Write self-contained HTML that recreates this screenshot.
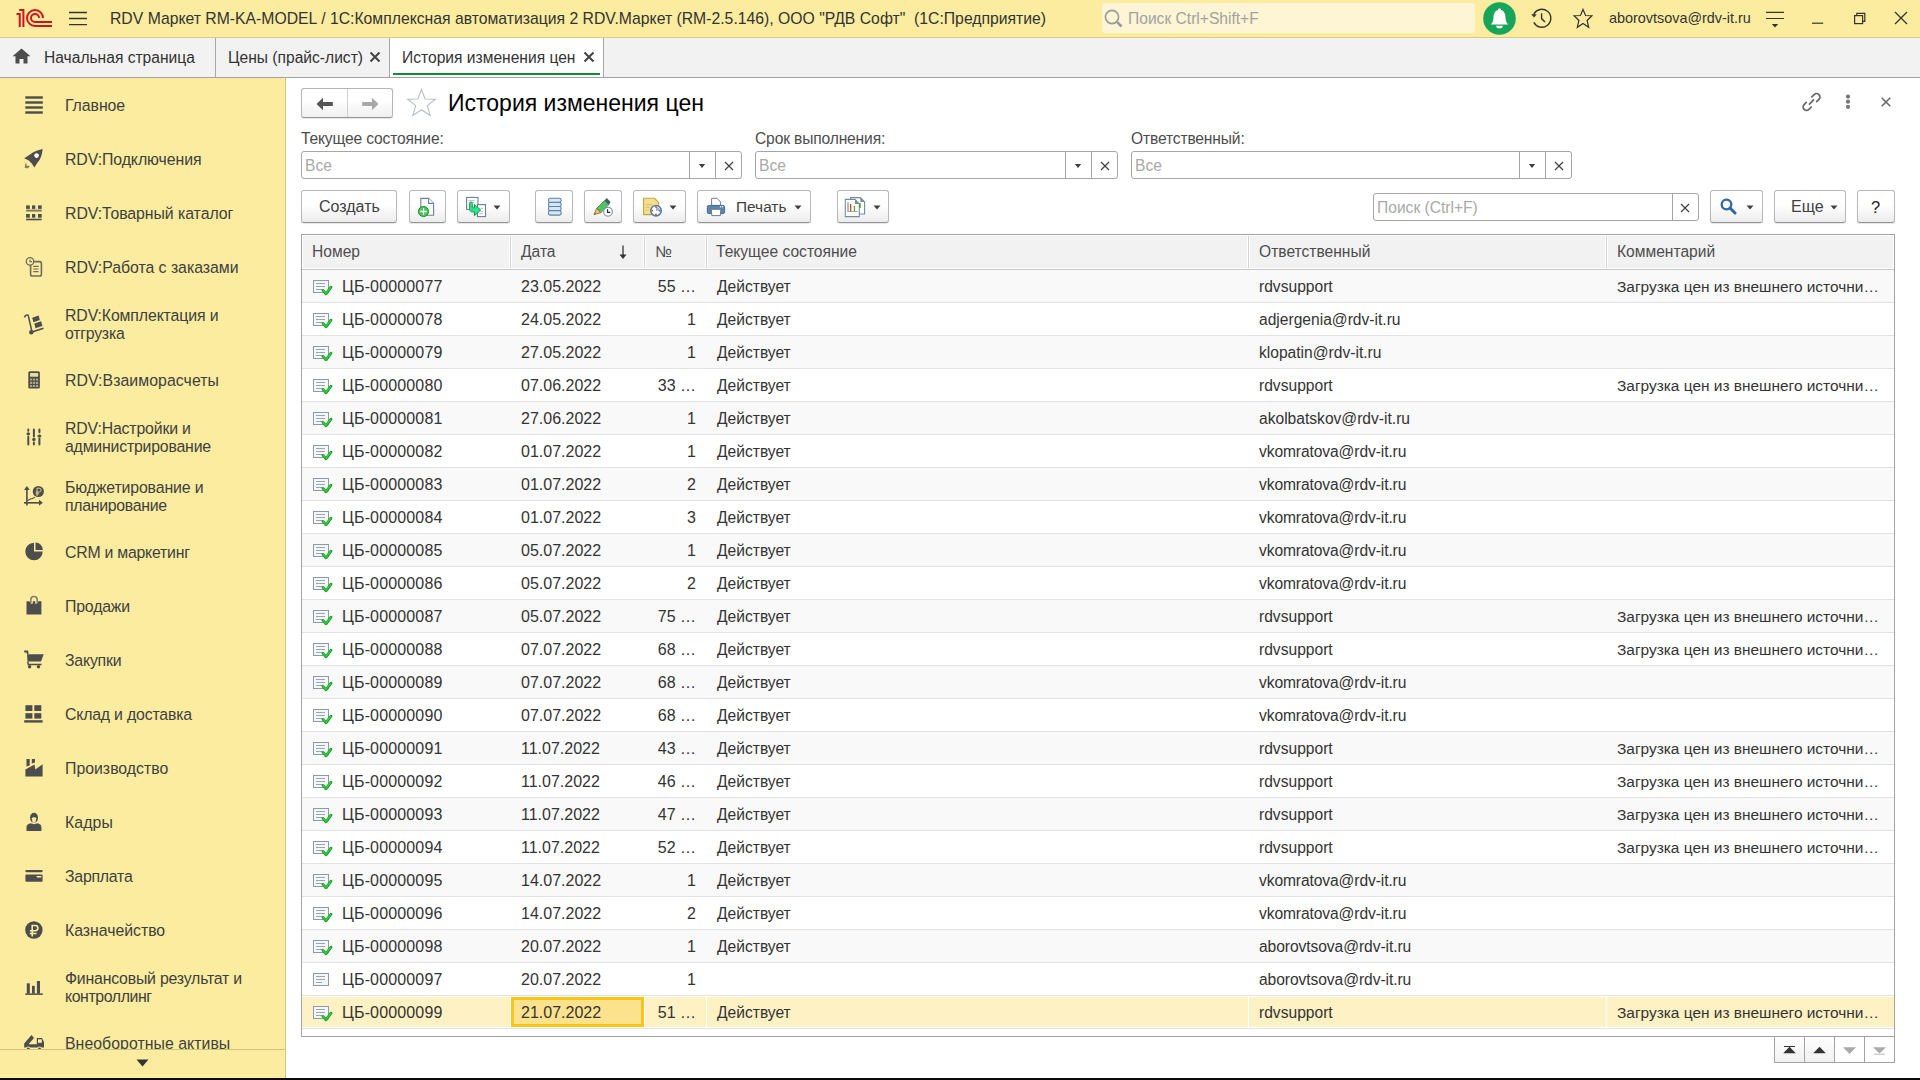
<!DOCTYPE html>
<html><head><meta charset="utf-8"><title>История изменения цен</title>
<style>
html,body{margin:0;padding:0}
body{width:1920px;height:1080px;position:relative;overflow:hidden;background:#fff;font-family:"Liberation Sans",sans-serif}
.t{position:absolute;white-space:pre;line-height:20px}
svg{display:block}
</style></head><body>
<div style="position:absolute;left:0px;top:0px;width:1920px;height:37px;background:#fbec9f"></div>
<div style="position:absolute;left:0px;top:37px;width:1920px;height:1px;background:#d9cc80"></div>
<svg style="position:absolute;left:0px;top:0px;" width="60" height="37" viewBox="0 0 60 37"><g fill="none" stroke="#d2131b" stroke-width="2">
<path d="M16.5 14 H19.75 V27"/><path d="M19.25 10.1 H23.4 V27"/>
<path d="M43 18 A8 8 0 1 0 35 26 H52"/>
<path d="M39 18 A4 4 0 1 0 35 22 H52"/>
</g></svg>
<svg style="position:absolute;left:69px;top:11px;" width="18" height="15" viewBox="0 0 18 15"><g stroke="#333" stroke-width="1.3"><path d="M0 1.5H18M0 7.5H18M0 13.7H18"/></g></svg>
<div class="t" style="left:110px;top:9px;font-size:15.75px;color:#333;">RDV Маркет RM-KA-MODEL / 1С:Комплексная автоматизация 2 RDV.Маркет (RM-2.5.146), ООО &quot;РДВ Софт&quot;  (1С:Предприятие)</div>
<div style="position:absolute;left:1102px;top:3px;width:373px;height:30px;background:#fdf5d3;border-radius:3px"></div>
<svg style="position:absolute;left:1104px;top:8px;" width="20" height="20" viewBox="0 0 20 20"><g fill="none" stroke="#999" stroke-width="1.6"><circle cx="8" cy="9" r="6.6"/><path d="M13.2 14.2 L17.5 18.5" stroke-width="2.6"/></g></svg>
<div class="t" style="left:1128px;top:9px;font-size:15.6px;color:#a2a2a2;">Поиск Ctrl+Shift+F</div>
<svg style="position:absolute;left:1483px;top:2px;" width="33" height="33" viewBox="0 0 33 33"><circle cx="16.5" cy="16.5" r="16.3" fill="#17a55a"/><path d="M16.5 6.6 C17.5 6.6 18 7.3 18 8.1 C21.4 9 22.4 12.4 22.5 15.8 C22.6 18.9 23.4 20.7 25.1 22.6 H7.9 C9.6 20.7 10.4 18.9 10.5 15.8 C10.6 12.4 11.6 9 15 8.1 C15 7.3 15.5 6.6 16.5 6.6 Z" fill="#fff"/><path d="M13.2 23.7 H19.8 A3.3 2.6 0 0 1 13.2 23.7 Z" fill="#fff"/></svg>
<svg style="position:absolute;left:1530px;top:8px;" width="22" height="21" viewBox="0 0 22 21"><g fill="none" stroke="#333" stroke-width="1.4"><path d="M3.8 14.4 A9 9 0 1 0 3.8 6.2"/><path d="M11.6 5.2 V10.6 L15 14"/></g><path d="M1.2 6.2 H6.8 L4 9.6 Z" fill="#333"/></svg>
<svg style="position:absolute;left:1572px;top:8px;" width="22" height="21" viewBox="0 0 22 21"><path d="M11 1.4 L13.6 7.5 L19.9 7.7 L15.1 12.5 L16.7 19.3 L11 15.4 L5.3 19.3 L6.9 12.5 L2.1 7.7 L8.4 7.5 Z" fill="none" stroke="#333" stroke-width="1.2" stroke-linejoin="miter"/></svg>
<div class="t" style="left:1609px;top:8px;font-size:14.4px;color:#333;">aborovtsova@rdv-it.ru</div>
<svg style="position:absolute;left:1765px;top:11px;" width="20" height="18" viewBox="0 0 20 18"><g stroke="#333" stroke-width="1.2"><path d="M1 1.3H19M1 7.5H19"/></g><path d="M6.8 13 L13.2 13 L10 16.5z" fill="#333"/></svg>
<svg style="position:absolute;left:1812px;top:22px;" width="12" height="3" viewBox="0 0 12 3"><path d="M0 1.2H11.2" stroke="#333" stroke-width="1.2"/></svg>
<svg style="position:absolute;left:1853px;top:12px;" width="13" height="13" viewBox="0 0 13 13"><g fill="none" stroke="#333" stroke-width="1.2"><rect x="1.6" y="3.6" width="8" height="8"/><path d="M3.8 3.6 V1.4 H11.8 V9.4 H9.6"/></g></svg>
<svg style="position:absolute;left:1894px;top:11px;" width="14" height="14" viewBox="0 0 14 14"><path d="M1 1L13 13M13 1L1 13" stroke="#333" stroke-width="1.3"/></svg>
<div style="position:absolute;left:0px;top:38px;width:1920px;height:39px;background:#f2f2f2"></div>
<div style="position:absolute;left:0px;top:77px;width:1920px;height:1px;background:#a3a3a3"></div>
<div style="position:absolute;left:389px;top:38px;width:215px;height:39px;background:#fff"></div>
<div style="position:absolute;left:215px;top:38px;width:1px;height:39px;background:#a8a8a8"></div>
<div style="position:absolute;left:389px;top:38px;width:1px;height:39px;background:#a5a5a5"></div>
<div style="position:absolute;left:603px;top:38px;width:1px;height:39px;background:#a5a5a5"></div>
<div style="position:absolute;left:393px;top:73px;width:207px;height:2px;background:#0f8d37"></div>
<svg style="position:absolute;left:12px;top:48px;" width="19" height="16" viewBox="0 0 19 16"><path d="M9.5 0.5 L18.5 8.2 H15.5 V15.5 H11.5 V11 H7.5 V15.5 H3.5 V8.2 H0.5 Z" fill="#4d4d4d"/></svg>
<div class="t" style="left:44px;top:48px;font-size:15.6px;color:#333;">Начальная страница</div>
<div class="t" style="left:228px;top:48px;font-size:15.6px;color:#333;">Цены (прайс-лист)</div>
<svg style="position:absolute;left:369px;top:51px;" width="12" height="12" viewBox="0 0 12 12"><path d="M1.5 1.5L10.5 10.5M10.5 1.5L1.5 10.5" stroke="#444" stroke-width="2"/></svg>
<div class="t" style="left:402px;top:48px;font-size:15.6px;color:#333;">История изменения цен</div>
<svg style="position:absolute;left:583px;top:51px;" width="12" height="12" viewBox="0 0 12 12"><path d="M1.5 1.5L10.5 10.5M10.5 1.5L1.5 10.5" stroke="#444" stroke-width="2"/></svg>
<div style="position:absolute;left:0px;top:78px;width:285px;height:1000px;background:#fbec9f"></div>
<div style="position:absolute;left:285px;top:78px;width:1px;height:1000px;background:#d3c783"></div>
<div style="position:absolute;left:0;top:78px;width:285px;height:971px;overflow:hidden">
<div class="t" style="left:65px;top:18px;font-size:15.85px;letter-spacing:-0.07px;color:#404040">Главное</div>
<div class="t" style="left:65px;top:72px;font-size:15.85px;letter-spacing:-0.07px;color:#404040">RDV:Подключения</div>
<div class="t" style="left:65px;top:126px;font-size:15.85px;letter-spacing:-0.06px;color:#404040">RDV:Товарный каталог</div>
<div class="t" style="left:65px;top:180px;font-size:15.85px;letter-spacing:-0.03px;color:#404040">RDV:Работа с заказами</div>
<div class="t" style="left:65px;top:228px;font-size:15.85px;letter-spacing:-0.12px;color:#404040">RDV:Комплектация и</div>
<div class="t" style="left:65px;top:246px;font-size:15.85px;letter-spacing:-0.24px;color:#404040">отгрузка</div>
<div class="t" style="left:65px;top:293px;font-size:15.85px;letter-spacing:0.06px;color:#404040">RDV:Взаиморасчеты</div>
<div class="t" style="left:65px;top:341px;font-size:15.85px;letter-spacing:-0.16px;color:#404040">RDV:Настройки и</div>
<div class="t" style="left:65px;top:359px;font-size:15.85px;letter-spacing:-0.2px;color:#404040">администрирование</div>
<div class="t" style="left:65px;top:400px;font-size:15.85px;letter-spacing:-0.13px;color:#404040">Бюджетирование и</div>
<div class="t" style="left:65px;top:418px;font-size:15.85px;letter-spacing:-0.3px;color:#404040">планирование</div>
<div class="t" style="left:65px;top:465px;font-size:15.85px;letter-spacing:-0.24px;color:#404040">CRM и маркетинг</div>
<div class="t" style="left:65px;top:519px;font-size:15.85px;letter-spacing:-0.17px;color:#404040">Продажи</div>
<div class="t" style="left:65px;top:573px;font-size:15.85px;letter-spacing:-0.2px;color:#404040">Закупки</div>
<div class="t" style="left:65px;top:627px;font-size:15.85px;letter-spacing:-0.19px;color:#404040">Склад и доставка</div>
<div class="t" style="left:65px;top:681px;font-size:15.85px;letter-spacing:0px;color:#404040">Производство</div>
<div class="t" style="left:65px;top:735px;font-size:15.85px;letter-spacing:0.1px;color:#404040">Кадры</div>
<div class="t" style="left:65px;top:789px;font-size:15.85px;letter-spacing:-0.23px;color:#404040">Зарплата</div>
<div class="t" style="left:65px;top:843px;font-size:15.85px;letter-spacing:-0.03px;color:#404040">Казначейство</div>
<div class="t" style="left:65px;top:891px;font-size:15.85px;letter-spacing:-0.2px;color:#404040">Финансовый результат и</div>
<div class="t" style="left:65px;top:909px;font-size:15.85px;letter-spacing:-0.4px;color:#404040">контроллинг</div>
<div class="t" style="left:65px;top:956px;font-size:15.85px;letter-spacing:0.04px;color:#404040">Внеоборотные активы</div>
</div>
<div style="position:absolute;left:0px;top:1049px;width:285px;height:1px;background:#cfc27f"></div>
<svg style="position:absolute;left:136px;top:1059px;" width="13" height="8" viewBox="0 0 13 8"><path d="M0.5 0.5 H12.5 L6.5 7.5z" fill="#333"/></svg>
<div style="position:absolute;left:0px;top:1078px;width:1920px;height:2px;background:#0b0b0b"></div>
<svg style="position:absolute;left:20px;top:90px;" width="30" height="30" viewBox="0 0 30 30"><g fill="#4d4d4d"><rect x="5.3" y="6.3" width="17.5" height="2.4"/><rect x="5.3" y="11.3" width="17.5" height="2.4"/><rect x="5.3" y="16.3" width="17.5" height="2.4"/><rect x="5.3" y="21.3" width="17.5" height="2.4"/></g></svg>
<svg style="position:absolute;left:20px;top:144px;" width="30" height="30" viewBox="0 0 30 30"><path d="M22.6 5 C17.5 6 12.8 8 10 10.6 L4.2 14.3 L8.8 16.6 L12 19.8 L14.3 23.4 L17.6 18.4 C20.4 15.6 22.2 10.8 22.6 5 Z" fill="#4d4d4d"/><circle cx="16.6" cy="11.6" r="2.3" fill="#fff"/><path d="M5.6 19 L9.6 22.4 L7.6 24.4 L4.6 23.6 Z" fill="#4d4d4d" opacity=".7"/><circle cx="7.3" cy="20.9" r="1" fill="#fbec9f"/></svg>
<svg style="position:absolute;left:20px;top:198px;" width="30" height="30" viewBox="0 0 30 30"><g fill="#4d4d4d"><rect x="6.1" y="7.4" width="3.7" height="3.5"/><rect x="12" y="7.4" width="3.3" height="3.5"/><rect x="18" y="7.4" width="3.7" height="3.5"/><rect x="6.1" y="16" width="3.7" height="3.7"/><rect x="12" y="16" width="3.3" height="3.7"/><rect x="18" y="16" width="3.7" height="3.7"/><rect x="6.1" y="20.7" width="15.6" height="1.6"/></g><rect x="6.1" y="11.6" width="15.6" height="2" fill="#4d4d4d" opacity=".7"/></svg>
<svg style="position:absolute;left:20px;top:252px;" width="30" height="30" viewBox="0 0 30 30"><g fill="none" stroke="#4d4d4d" opacity=".8"><rect x="10.6" y="9.6" width="10.8" height="14.4" rx="1.8" stroke-width="1.6"/><circle cx="10" cy="9.4" r="3.7" stroke-width="1.3" fill="#fbec9f"/><path d="M13.2 14.4H18.6M13.2 17H18.6M13.2 19.6H18.6" stroke-width="1.2"/><path d="M10 7.5V9.6H12" stroke-width="1.1"/></g></svg>
<svg style="position:absolute;left:20px;top:309px;" width="30" height="30" viewBox="0 0 30 30"><g fill="none" stroke="#4d4d4d" stroke-width="1.5"><path d="M4.5 8.5 C4.8 6.3 6.6 5.6 8.2 6.2 L12 23"/><path d="M12 23 L23.5 19.2" stroke-width="1.6"/></g><circle cx="11.3" cy="23.2" r="2.2" fill="#4d4d4d"/><path d="M12.2 8.8 L18.6 6.6 L19.8 11 L13.4 13.2 Z M14.3 14.6 L21.2 12.3 L22.4 17 L15.5 19.3 Z" fill="#4d4d4d"/></svg>
<svg style="position:absolute;left:20px;top:365px;" width="30" height="30" viewBox="0 0 30 30"><rect x="8.3" y="6.2" width="11.6" height="17.4" rx="1.6" fill="#4d4d4d"/><rect x="10" y="8" width="8.2" height="3.8" rx=".8" fill="#fbec9f" opacity=".9"/><g fill="#fbec9f" opacity=".55"><rect x="10" y="13.6" width="2.2" height="2"/><rect x="13" y="13.6" width="2.2" height="2"/><rect x="16" y="13.6" width="2.2" height="2"/><rect x="10" y="16.8" width="2.2" height="2.2"/><rect x="13" y="16.8" width="2.2" height="2.2"/><rect x="16" y="16.8" width="2.2" height="2.2"/><rect x="10" y="20" width="2.2" height="2"/><rect x="13" y="20" width="2.2" height="2"/><rect x="16" y="20" width="2.2" height="2"/></g></svg>
<svg style="position:absolute;left:20px;top:422px;" width="30" height="30" viewBox="0 0 30 30"><g stroke="#4d4d4d" stroke-width="2" stroke-linecap="round"><path d="M8.3 7.5V8.7M8.3 14.8V22.6M13.9 7.5V14.4M13.9 20.6V22.6M19.4 7.5V10.2M19.4 16.5V22.6"/></g><g fill="#4d4d4d"><ellipse cx="8.3" cy="11.8" rx="1.8" ry="1.6"/><circle cx="13.9" cy="17.5" r="1.7"/><ellipse cx="19.4" cy="14" rx="2" ry="1.5"/></g></svg>
<svg style="position:absolute;left:20px;top:481px;" width="30" height="30" viewBox="0 0 30 30"><g fill="#4d4d4d"><path d="M4 9 L6.9 5 L9.8 9 Z"/><path d="M19 18.8 L22.8 21.8 L19 24.8 Z"/><rect x="6.1" y="8" width="1.6" height="16.5"/><rect x="4" y="21" width="15.5" height="1.6"/><circle cx="18.3" cy="10.5" r="5.6"/></g><path d="M7.5 19.5 L10.5 18 L12.5 17.6 L14.8 16.2" fill="none" stroke="#4d4d4d" stroke-width="1.1"/><g fill="none" stroke="#fbec9f" stroke-width="1" opacity=".8"><path d="M17 15V7.2H19.2A1.9 1.9 0 0 1 19.2 11H15.8M15.8 12.8H19"/></g></svg>
<svg style="position:absolute;left:20px;top:537px;" width="30" height="30" viewBox="0 0 30 30"><path d="M14 5.8 V14.5 H22.7 A8.7 8.7 0 1 1 14 5.8 Z" fill="#4d4d4d"/><path d="M15.5 5.6 A7.4 7.4 0 0 1 22.9 13 H15.5 Z" fill="#4d4d4d"/></svg>
<svg style="position:absolute;left:20px;top:591px;" width="30" height="30" viewBox="0 0 30 30"><path d="M6.5 10.2 H9.6 C 10 12.5 11.8 13.2 12.8 12.5 V10.2 H15.2 V12.5 C16.2 13.2 18 12.5 18.3 10.2 H21.4 V23.6 H6.5 Z" fill="#4d4d4d"/><path d="M10.8 12.3 V8.8 A3.2 3.2 0 0 1 17.2 8.8 V12.3" fill="none" stroke="#4d4d4d" stroke-width="1.5" opacity=".7"/></svg>
<svg style="position:absolute;left:20px;top:645px;" width="30" height="30" viewBox="0 0 30 30"><path d="M4.2 6.5 H7.3 L7.8 9" fill="none" stroke="#4d4d4d" stroke-width="1.8"/><path d="M7 9.2 H23.7 L21 16.6 H7.5 Z" fill="#4d4d4d"/><path d="M7.8 16.5 L8.3 19.5 H21.5" fill="none" stroke="#4d4d4d" stroke-width="1.5"/><circle cx="9.6" cy="21.8" r="1.7" fill="#4d4d4d"/><circle cx="18.5" cy="21.8" r="1.7" fill="#4d4d4d"/></svg>
<svg style="position:absolute;left:20px;top:699px;" width="30" height="30" viewBox="0 0 30 30"><g fill="#4d4d4d"><rect x="5.4" y="6.2" width="7" height="5.8"/><rect x="14.3" y="6.2" width="7" height="5.8"/><rect x="5.4" y="14.2" width="7" height="5.4"/><rect x="14.3" y="14.2" width="7" height="5.4"/><rect x="4.2" y="21.2" width="18.4" height="2.4"/></g></svg>
<svg style="position:absolute;left:20px;top:753px;" width="30" height="30" viewBox="0 0 30 30"><g fill="#4d4d4d"><path d="M6.5 6 H9.7 V12.5 L6.5 13.5 Z"/><path d="M11.8 6 H15 V9.5 L11.8 10.6 Z"/><path d="M5.4 16.6 L14.5 11.4 L15.3 16.5 L22.6 11.3 V23.6 H5.4 Z"/></g></svg>
<svg style="position:absolute;left:20px;top:807px;" width="30" height="30" viewBox="0 0 30 30"><ellipse cx="14" cy="10.8" rx="4" ry="5" fill="#4d4d4d"/><path d="M11.8 11.2 C12.5 10 15.5 10 16.2 11.2 L15.5 15 C15 15.8 13 15.8 12.5 15 Z" fill="#fbec9f"/><path d="M6.5 24 V19.8 C6.5 18 8.5 16.8 10.6 16.2 L14 17.2 L17.4 16.2 C19.5 16.8 21.4 18 21.4 19.8 V24 Z" fill="#4d4d4d"/></svg>
<svg style="position:absolute;left:20px;top:861px;" width="30" height="30" viewBox="0 0 30 30"><g fill="#4d4d4d"><rect x="5.4" y="9" width="17.2" height="2.2" rx="1"/><rect x="5.4" y="13.4" width="17.2" height="7.4" rx="1"/></g><rect x="16.5" y="15.1" width="5" height="1.3" rx=".6" fill="#fbec9f"/></svg>
<svg style="position:absolute;left:20px;top:915px;" width="30" height="30" viewBox="0 0 30 30"><circle cx="13.9" cy="15" r="8.7" fill="#4d4d4d"/><g fill="none" stroke="#fbec9f" stroke-width="1.6"><path d="M12.2 21.5 V10.5 H15.3 A2.6 2.6 0 0 1 15.3 15.7 H9.8"/><path d="M9.8 18.5 H16.5"/></g></svg>
<svg style="position:absolute;left:20px;top:972px;" width="30" height="30" viewBox="0 0 30 30"><g fill="#4d4d4d"><rect x="6.8" y="11.3" width="3" height="10.4"/><rect x="12" y="13.8" width="2.8" height="7.9"/><rect x="16.9" y="9" width="3.1" height="12.7"/><rect x="5.3" y="21.4" width="17.5" height="1.5"/></g></svg>
<div style="position:absolute;left:20px;top:1025px;width:30px;height:24px;overflow:hidden">
<svg style="position:absolute;left:0;top:0" width="30" height="30" viewBox="0 0 30 30"><g fill="#4d4d4d"><path d="M4.2 18.5 L11.5 10 L14 13 L8.5 19.3 H16.8 V13 H22 L24 17 V22.5 H4.2 Z"/></g><circle cx="8.3" cy="23.8" r="2.3" fill="#fbec9f"/><circle cx="19.5" cy="23.8" r="2.3" fill="#fbec9f"/><circle cx="8.3" cy="23.8" r="1.4" fill="#4d4d4d"/><circle cx="19.5" cy="23.8" r="1.4" fill="#4d4d4d"/><rect x="18" y="14.3" width="3.8" height="3.5" fill="#fbec9f"/></svg></div>
<svg style="position:absolute;left:412px;top:193px;z-index:2" width="30" height="27" viewBox="0 0 30 27"><path d="M8.8 5.4 H16.6 L21.6 10.4 V22.3 H8.8 Z" fill="#fbfbfb" stroke="#6d8095" stroke-width="1.1"/><path d="M16.6 5.4 V10.4 H21.6" fill="#fff" stroke="#6d8095" stroke-width="1.1"/><circle cx="11.5" cy="18.5" r="5.1" fill="#4cc05c" stroke="#129a28" stroke-width="1"/><path d="M11.5 15.3 V21.7 M8.3 18.5 H14.7" stroke="#fff" stroke-width="1.3"/></svg>
<svg style="position:absolute;left:460px;top:193px;z-index:2" width="30" height="27" viewBox="0 0 30 27"><rect x="6.6" y="4.4" width="11.4" height="12" fill="#fff" stroke="#6d7f92" stroke-width="1.1"/><path d="M9 7.5H14.5M9 9.5H14.5" stroke="#a9b4bf" stroke-width=".8"/><rect x="17.5" y="11.6" width="8" height="12" fill="#fff" stroke="#6d7f92" stroke-width="1.1"/><path d="M20.5 15.5H23M20.5 18.5H23M19.5 20.5H23" stroke="#a9b4bf" stroke-width=".8"/><path d="M9.6 10.5 C9.6 8.5 12.3 8.5 12.3 10.5 V14.8 H14.5 V11.5 L20.7 17 L14.5 22.6 V19 H12.5 C10.8 19 9.6 17.7 9.6 15.8 Z" fill="#2ce592" stroke="#159c48" stroke-width="1"/></svg>
<svg style="position:absolute;left:540px;top:193px;z-index:2" width="30" height="27" viewBox="0 0 30 27"><g fill="#d6e6f4" stroke="#5c84a8" stroke-width="1.1"><rect x="8.5" y="5.3" width="12.6" height="4.2" rx="1.6"/><rect x="8.5" y="9.4" width="12.6" height="4.2" rx="1.6"/><rect x="8.5" y="13.5" width="12.6" height="4.2" rx="1.6"/><rect x="8.5" y="17.6" width="12.6" height="4.5" rx="1.6"/></g></svg>
<svg style="position:absolute;left:588px;top:193px;z-index:2" width="30" height="27" viewBox="0 0 30 27"><path d="M8.6 15.4 L16.4 7.6 L20.6 11.8 L12.8 19.6 Z" fill="#55c062" stroke="#2a9a3a" stroke-width=".8"/><path d="M16.4 7.6 L17.7 6.3 Q18 4.6 19.2 5.6 L21.9 8.3 Q22.8 9.6 21.9 10.5 L20.6 11.8 Z" fill="#4b5868"/><path d="M8.6 15.4 L12.8 19.6 L6 21.6 Z" fill="#f6c66b" stroke="#7a5a2e" stroke-width=".8"/><path d="M6.2 21.4 L7.2 20 L8 20.8 Z" fill="#5a4020"/><circle cx="20" cy="18.8" r="4.4" fill="#fff" stroke="#7d95ad" stroke-width="1.1"/><path d="M19.6 16.2 V19.4 H22.2" fill="none" stroke="#222" stroke-width="1.1"/></svg>
<svg style="position:absolute;left:636px;top:193px;z-index:2" width="30" height="27" viewBox="0 0 30 27"><path d="M7.6 5.3 H18.6 L22.6 9.5 V21.6 H7.6 Z" fill="#f3e08c" stroke="#c9a43c" stroke-width="1.1"/><path d="M9.5 11.6H16M9.5 14.3H14M9.5 17H13" stroke="#d8c070" stroke-width=".9"/><circle cx="20" cy="17.7" r="5.2" fill="#fff" stroke="#4d7fb1" stroke-width="1.6"/><path d="M20 17.7 V14 A3.7 3.7 0 0 1 23.7 17.7 Z" fill="#92b4e0"/><g fill="#e23b3b"><circle cx="20" cy="14" r=".9"/><circle cx="20" cy="21.5" r=".9"/><circle cx="16.3" cy="17.7" r=".9"/><circle cx="23.7" cy="17.7" r=".9"/></g></svg>
<svg style="position:absolute;left:703px;top:193px;z-index:2" width="30" height="27" viewBox="0 0 30 27"><path d="M8.6 5.3 H14 L17.6 9.1 V12.6 H8.6 Z" fill="#fff" stroke="#6c7e90" stroke-width="1"/><rect x="4.3" y="12.4" width="17.3" height="8.2" rx="1.6" fill="#5c84ad" stroke="#3d6490" stroke-width=".9"/><path d="M8.3 16.3 H17.8 L17.3 22.6 H8.8 Z" fill="#fff" stroke="#687b8e" stroke-width="1"/><circle cx="17.5" cy="13.8" r=".7" fill="#fff"/><circle cx="19.5" cy="13.8" r=".7" fill="#fff"/></svg>
<svg style="position:absolute;left:840px;top:193px;z-index:2" width="30" height="27" viewBox="0 0 30 27"><path d="M10.6 4.6 H20.4 L24.6 8.9 V21 H10.6 Z" fill="#fff" stroke="#7b8a99" stroke-width="1.1"/><path d="M20.4 4.6 V8.9 H24.6 Z" fill="#7b8a99"/><path d="M5.3 6.4 H15 L19.3 10.9 V23.6 H5.3 Z" fill="#fff" stroke="#7b8a99" stroke-width="1.1"/><path d="M15 6.4 V10.9 H19.3 Z" fill="#7b8a99"/><rect x="7.2" y="9.3" width="1.6" height="9" fill="#a9a9a9"/><rect x="10" y="11" width="1.3" height="7.4" fill="#e6401e"/><rect x="13.8" y="13" width="1.3" height="5.4" fill="#4aae2a"/><rect x="7.2" y="18" width="10.5" height=".9" fill="#9a9a9a"/><rect x="19.3" y="10" width="1.4" height="5" fill="#3f9a2a"/></svg>
<div style="position:absolute;left:301px;top:88px;width:92px;height:30px;border:1px solid #b5b5b5;border-bottom-color:#959595;border-radius:3px;background:linear-gradient(#fff 40%,#f0f0f0);box-sizing:border-box;box-shadow:0 1px 1px rgba(0,0,0,.10)"></div>
<div style="position:absolute;left:347px;top:89px;width:1px;height:28px;background:#d0d0d0"></div>
<svg style="position:absolute;left:316px;top:97px;" width="18" height="14" viewBox="0 0 18 14"><path d="M0.5 7 L7 0.8 V5 H16.8 V9 H7 V13.2 Z" fill="#555"/></svg>
<svg style="position:absolute;left:361px;top:97px;" width="18" height="14" viewBox="0 0 18 14"><path d="M17.5 7 L11 0.8 V5 H1.2 V9 H11 V13.2 Z" fill="#a9a9a9"/></svg>
<svg style="position:absolute;left:406px;top:88px;" width="31" height="30" viewBox="0 0 31 30"><path d="M15.5 1.5 L19.1 11 L29.3 11.3 L21.3 17.6 L24.2 27.4 L15.5 21.7 L6.8 27.4 L9.7 17.6 L1.7 11.3 L11.9 11 Z" fill="none" stroke="#b5bec6" stroke-width="1.1"/></svg>
<div class="t" style="left:448px;top:93px;font-size:23px;color:#000">История изменения цен</div>
<svg style="position:absolute;left:1800px;top:91px;" width="23" height="22" viewBox="0 0 23 22"><g transform="rotate(-45 11.5 11)" fill="none" stroke="#666" stroke-width="1.7" stroke-linecap="round"><path d="M7.6 7.6 H4.4 A3.4 3.4 0 0 0 4.4 14.4 H7.6"/><path d="M15.4 7.6 H18.6 A3.4 3.4 0 0 1 18.6 14.4 H15.4"/><path d="M8.6 11 H14.4"/></g></svg>
<svg style="position:absolute;left:1844px;top:93px;" width="8" height="18" viewBox="0 0 8 18"><g fill="#777"><circle cx="4" cy="3.6" r="2.1"/><circle cx="4" cy="8.7" r="2.1"/><circle cx="4" cy="13.8" r="2.1"/></g></svg>
<svg style="position:absolute;left:1880px;top:96px;" width="12" height="12" viewBox="0 0 12 12"><path d="M1.7 1.7L10.3 10.3M10.3 1.7L1.7 10.3" stroke="#666" stroke-width="1.5"/></svg>
<div class="t" style="left:301px;top:129px;font-size:15.6px;color:#4d4d4d;letter-spacing:-0.15px">Текущее состояние:</div>
<div style="position:absolute;left:301px;top:151px;width:441px;height:28px;border:1px solid #a5a5a5;border-radius:3px;background:#fff;box-sizing:border-box"></div>
<div style="position:absolute;left:689px;top:152px;width:1px;height:26px;background:#a5a5a5"></div>
<div style="position:absolute;left:715px;top:152px;width:1px;height:26px;background:#a5a5a5"></div>
<div class="t" style="left:305px;top:156px;font-size:15.6px;color:#a9a9a9;">Все</div>
<svg style="position:absolute;left:698px;top:163px;" width="8" height="6" viewBox="0 0 8 6"><path d="M0.8 1 H7.2 L4 5z" fill="#404040"/></svg>
<svg style="position:absolute;left:724px;top:161px;" width="10" height="10" viewBox="0 0 10 10"><path d="M1 1L9 9M9 1L1 9" stroke="#404040" stroke-width="1.2"/></svg>
<div class="t" style="left:755px;top:129px;font-size:15.6px;color:#4d4d4d;letter-spacing:-0.15px">Срок выполнения:</div>
<div style="position:absolute;left:755px;top:151px;width:363px;height:28px;border:1px solid #a5a5a5;border-radius:3px;background:#fff;box-sizing:border-box"></div>
<div style="position:absolute;left:1065px;top:152px;width:1px;height:26px;background:#a5a5a5"></div>
<div style="position:absolute;left:1091px;top:152px;width:1px;height:26px;background:#a5a5a5"></div>
<div class="t" style="left:759px;top:156px;font-size:15.6px;color:#a9a9a9;">Все</div>
<svg style="position:absolute;left:1074px;top:163px;" width="8" height="6" viewBox="0 0 8 6"><path d="M0.8 1 H7.2 L4 5z" fill="#404040"/></svg>
<svg style="position:absolute;left:1100px;top:161px;" width="10" height="10" viewBox="0 0 10 10"><path d="M1 1L9 9M9 1L1 9" stroke="#404040" stroke-width="1.2"/></svg>
<div class="t" style="left:1131px;top:129px;font-size:15.6px;color:#4d4d4d;letter-spacing:-0.15px">Ответственный:</div>
<div style="position:absolute;left:1131px;top:151px;width:441px;height:28px;border:1px solid #a5a5a5;border-radius:3px;background:#fff;box-sizing:border-box"></div>
<div style="position:absolute;left:1519px;top:152px;width:1px;height:26px;background:#a5a5a5"></div>
<div style="position:absolute;left:1545px;top:152px;width:1px;height:26px;background:#a5a5a5"></div>
<div class="t" style="left:1135px;top:156px;font-size:15.6px;color:#a9a9a9;">Все</div>
<svg style="position:absolute;left:1528px;top:163px;" width="8" height="6" viewBox="0 0 8 6"><path d="M0.8 1 H7.2 L4 5z" fill="#404040"/></svg>
<svg style="position:absolute;left:1554px;top:161px;" width="10" height="10" viewBox="0 0 10 10"><path d="M1 1L9 9M9 1L1 9" stroke="#404040" stroke-width="1.2"/></svg>
<div style="position:absolute;left:301px;top:190px;width:96px;height:33px;border:1px solid #b8b8b8;border-bottom-color:#959595;border-radius:3px;background:linear-gradient(#fff 45%,#ececec);box-sizing:border-box;box-shadow:0 1px 1px rgba(0,0,0,.10)"></div>
<div class="t" style="left:319px;top:197px;font-size:16px;color:#404040;">Создать</div>
<div style="position:absolute;left:409px;top:190px;width:37px;height:33px;border:1px solid #b8b8b8;border-bottom-color:#959595;border-radius:3px;background:linear-gradient(#fff 45%,#ececec);box-sizing:border-box;box-shadow:0 1px 1px rgba(0,0,0,.10)"></div>
<div style="position:absolute;left:457px;top:190px;width:53px;height:33px;border:1px solid #b8b8b8;border-bottom-color:#959595;border-radius:3px;background:linear-gradient(#fff 45%,#ececec);box-sizing:border-box;box-shadow:0 1px 1px rgba(0,0,0,.10)"></div>
<div style="position:absolute;left:535px;top:190px;width:38px;height:33px;border:1px solid #b8b8b8;border-bottom-color:#959595;border-radius:3px;background:linear-gradient(#fff 45%,#ececec);box-sizing:border-box;box-shadow:0 1px 1px rgba(0,0,0,.10)"></div>
<div style="position:absolute;left:584px;top:190px;width:38px;height:33px;border:1px solid #b8b8b8;border-bottom-color:#959595;border-radius:3px;background:linear-gradient(#fff 45%,#ececec);box-sizing:border-box;box-shadow:0 1px 1px rgba(0,0,0,.10)"></div>
<div style="position:absolute;left:633px;top:190px;width:53px;height:33px;border:1px solid #b8b8b8;border-bottom-color:#959595;border-radius:3px;background:linear-gradient(#fff 45%,#ececec);box-sizing:border-box;box-shadow:0 1px 1px rgba(0,0,0,.10)"></div>
<div style="position:absolute;left:697px;top:190px;width:114px;height:33px;border:1px solid #b8b8b8;border-bottom-color:#959595;border-radius:3px;background:linear-gradient(#fff 45%,#ececec);box-sizing:border-box;box-shadow:0 1px 1px rgba(0,0,0,.10)"></div>
<div class="t" style="left:736px;top:197px;font-size:15.4px;color:#404040;">Печать</div>
<div style="position:absolute;left:837px;top:190px;width:52px;height:33px;border:1px solid #b8b8b8;border-bottom-color:#959595;border-radius:3px;background:linear-gradient(#fff 45%,#ececec);box-sizing:border-box;box-shadow:0 1px 1px rgba(0,0,0,.10)"></div>
<svg style="position:absolute;left:493px;top:205px;" width="8" height="5" viewBox="0 0 8 5"><path d="M0.5 0.5 H7.5 L4 4.5z" fill="#404040"/></svg>
<svg style="position:absolute;left:669px;top:205px;" width="8" height="5" viewBox="0 0 8 5"><path d="M0.5 0.5 H7.5 L4 4.5z" fill="#404040"/></svg>
<svg style="position:absolute;left:794px;top:205px;" width="8" height="5" viewBox="0 0 8 5"><path d="M0.5 0.5 H7.5 L4 4.5z" fill="#404040"/></svg>
<svg style="position:absolute;left:873px;top:205px;" width="8" height="5" viewBox="0 0 8 5"><path d="M0.5 0.5 H7.5 L4 4.5z" fill="#404040"/></svg>
<div style="position:absolute;left:1373px;top:193px;width:326px;height:28px;border:1px solid #a5a5a5;border-radius:3px;background:#fff;box-sizing:border-box"></div>
<div style="position:absolute;left:1672px;top:194px;width:1px;height:26px;background:#a5a5a5"></div>
<div class="t" style="left:1377px;top:198px;font-size:15.6px;color:#a9a9a9;">Поиск (Ctrl+F)</div>
<svg style="position:absolute;left:1680px;top:203px;" width="10" height="10" viewBox="0 0 10 10"><path d="M1 1L9 9M9 1L1 9" stroke="#404040" stroke-width="1.2"/></svg>
<div style="position:absolute;left:1710px;top:190px;width:53px;height:33px;border:1px solid #b8b8b8;border-bottom-color:#959595;border-radius:3px;background:linear-gradient(#fff 45%,#ececec);box-sizing:border-box;box-shadow:0 1px 1px rgba(0,0,0,.10)"></div>
<svg style="position:absolute;left:1720px;top:198px;" width="17" height="17" viewBox="0 0 17 17"><g fill="none" stroke="#2c6aa0"><circle cx="6.5" cy="6.5" r="4.8" stroke-width="2.3"/><path d="M10 10 L15 15" stroke-width="3" stroke-linecap="round"/></g></svg>
<svg style="position:absolute;left:1746px;top:205px;" width="8" height="5" viewBox="0 0 8 5"><path d="M0.5 0.5 H7.5 L4 4.5z" fill="#404040"/></svg>
<div style="position:absolute;left:1774px;top:190px;width:72px;height:33px;border:1px solid #b8b8b8;border-bottom-color:#959595;border-radius:3px;background:linear-gradient(#fff 45%,#ececec);box-sizing:border-box;box-shadow:0 1px 1px rgba(0,0,0,.10)"></div>
<div class="t" style="left:1791px;top:197px;font-size:16px;color:#404040;">Еще</div>
<svg style="position:absolute;left:1830px;top:205px;" width="8" height="5" viewBox="0 0 8 5"><path d="M0.5 0.5 H7.5 L4 4.5z" fill="#404040"/></svg>
<div style="position:absolute;left:1857px;top:190px;width:38px;height:33px;border:1px solid #b8b8b8;border-bottom-color:#959595;border-radius:3px;background:linear-gradient(#fff 45%,#ececec);box-sizing:border-box;box-shadow:0 1px 1px rgba(0,0,0,.10)"></div>
<div class="t" style="left:1871px;top:197px;font-size:16.5px;color:#222;">?</div>
<div style="position:absolute;left:301px;top:234px;width:1594px;height:803px;border:1px solid #a3a3a3;box-sizing:border-box;background:#fff"></div>
<div style="position:absolute;left:302px;top:235px;width:1592px;height:34px;background:#f2f2f2"></div>
<div style="position:absolute;left:302px;top:269px;width:1592px;height:1px;background:#cacaca"></div>
<div style="position:absolute;left:510px;top:235px;width:1px;height:34px;background:#d4d4d4"></div>
<div style="position:absolute;left:509px;top:235px;width:1px;height:34px;background:#fff"></div>
<div style="position:absolute;left:511px;top:235px;width:1px;height:34px;background:#fff"></div>
<div style="position:absolute;left:644px;top:235px;width:1px;height:34px;background:#d4d4d4"></div>
<div style="position:absolute;left:643px;top:235px;width:1px;height:34px;background:#fff"></div>
<div style="position:absolute;left:645px;top:235px;width:1px;height:34px;background:#fff"></div>
<div style="position:absolute;left:706px;top:235px;width:1px;height:34px;background:#d4d4d4"></div>
<div style="position:absolute;left:705px;top:235px;width:1px;height:34px;background:#fff"></div>
<div style="position:absolute;left:707px;top:235px;width:1px;height:34px;background:#fff"></div>
<div style="position:absolute;left:1248px;top:235px;width:1px;height:34px;background:#d4d4d4"></div>
<div style="position:absolute;left:1247px;top:235px;width:1px;height:34px;background:#fff"></div>
<div style="position:absolute;left:1249px;top:235px;width:1px;height:34px;background:#fff"></div>
<div style="position:absolute;left:1606px;top:235px;width:1px;height:34px;background:#d4d4d4"></div>
<div style="position:absolute;left:1605px;top:235px;width:1px;height:34px;background:#fff"></div>
<div style="position:absolute;left:1607px;top:235px;width:1px;height:34px;background:#fff"></div>
<div style="position:absolute;left:302px;top:235px;width:1592px;height:1px;background:#fff"></div>
<div style="position:absolute;left:302px;top:268px;width:1592px;height:1px;background:#fff"></div>
<div style="position:absolute;left:302px;top:235px;width:1px;height:34px;background:#fff"></div>
<div style="position:absolute;left:1893px;top:235px;width:1px;height:34px;background:#fff"></div>
<div class="t" style="left:312px;top:242px;font-size:15.6px;color:#4d4d4d;">Номер</div>
<div class="t" style="left:521px;top:242px;font-size:15.6px;color:#4d4d4d;">Дата</div>
<svg style="position:absolute;left:618px;top:245px;" width="10" height="15" viewBox="0 0 10 15"><path d="M5 0.5 V12" stroke="#333" stroke-width="1.3"/><path d="M1.5 9.5 H8.5 L5 14z" fill="#333"/></svg>
<div class="t" style="left:655px;top:242px;font-size:15.6px;color:#4d4d4d;">№</div>
<div class="t" style="left:716px;top:242px;font-size:15.6px;color:#4d4d4d;">Текущее состояние</div>
<div class="t" style="left:1259px;top:242px;font-size:15.6px;color:#4d4d4d;">Ответственный</div>
<div class="t" style="left:1617px;top:242px;font-size:15.6px;color:#4d4d4d;">Комментарий</div>
<div style="position:absolute;left:302px;top:270px;width:1592px;height:32px;background:#f9f9f9"></div>
<div style="position:absolute;left:302px;top:302px;width:1592px;height:1px;background:#e3e3e3"></div>
<svg style="position:absolute;left:313px;top:280px;" width="20" height="16" viewBox="0 0 20 16"><rect x="0.5" y="0.5" width="15" height="12" fill="#f4f6f8" stroke="#8a9aac"/><path d="M3 3.5H12M3 6.5H12M3 9.5H9" stroke="#9aa5b1" stroke-width="1"/><path d="M10 10.4 L13 13.8 L18 7.2" fill="none" stroke="#17a02a" stroke-width="2.8" stroke-linecap="round" stroke-linejoin="round"/><path d="M10.3 10.6 L13 13.5 L17.6 7.4" fill="none" stroke="#3fd447" stroke-width="1.1" stroke-linecap="round"/></svg>
<div class="t" style="left:342px;top:277px;font-size:16px;color:#333;letter-spacing:0.15px">ЦБ-00000077</div>
<div class="t" style="left:521px;top:277px;font-size:16px;color:#333;">23.05.2022</div>
<div class="t" style="left:600px;width:96px;text-align:right;top:277px;font-size:16px;color:#333">55 …</div>
<div class="t" style="left:717px;top:277px;font-size:15.6px;color:#333;">Действует</div>
<div class="t" style="left:1259px;top:277px;font-size:15.6px;color:#333;letter-spacing:0px">rdvsupport</div>
<div class="t" style="left:1617px;top:277px;font-size:15.45px;color:#333;">Загрузка цен из внешнего источни…</div>
<div style="position:absolute;left:302px;top:303px;width:1592px;height:32px;background:#fff"></div>
<div style="position:absolute;left:302px;top:335px;width:1592px;height:1px;background:#e3e3e3"></div>
<svg style="position:absolute;left:313px;top:313px;" width="20" height="16" viewBox="0 0 20 16"><rect x="0.5" y="0.5" width="15" height="12" fill="#f4f6f8" stroke="#8a9aac"/><path d="M3 3.5H12M3 6.5H12M3 9.5H9" stroke="#9aa5b1" stroke-width="1"/><path d="M10 10.4 L13 13.8 L18 7.2" fill="none" stroke="#17a02a" stroke-width="2.8" stroke-linecap="round" stroke-linejoin="round"/><path d="M10.3 10.6 L13 13.5 L17.6 7.4" fill="none" stroke="#3fd447" stroke-width="1.1" stroke-linecap="round"/></svg>
<div class="t" style="left:342px;top:310px;font-size:16px;color:#333;letter-spacing:0.15px">ЦБ-00000078</div>
<div class="t" style="left:521px;top:310px;font-size:16px;color:#333;">24.05.2022</div>
<div class="t" style="left:600px;width:96px;text-align:right;top:310px;font-size:16px;color:#333">1</div>
<div class="t" style="left:717px;top:310px;font-size:15.6px;color:#333;">Действует</div>
<div class="t" style="left:1259px;top:310px;font-size:15.6px;color:#333;letter-spacing:0px">adjergenia@rdv-it.ru</div>
<div style="position:absolute;left:302px;top:336px;width:1592px;height:32px;background:#f9f9f9"></div>
<div style="position:absolute;left:302px;top:368px;width:1592px;height:1px;background:#e3e3e3"></div>
<svg style="position:absolute;left:313px;top:346px;" width="20" height="16" viewBox="0 0 20 16"><rect x="0.5" y="0.5" width="15" height="12" fill="#f4f6f8" stroke="#8a9aac"/><path d="M3 3.5H12M3 6.5H12M3 9.5H9" stroke="#9aa5b1" stroke-width="1"/><path d="M10 10.4 L13 13.8 L18 7.2" fill="none" stroke="#17a02a" stroke-width="2.8" stroke-linecap="round" stroke-linejoin="round"/><path d="M10.3 10.6 L13 13.5 L17.6 7.4" fill="none" stroke="#3fd447" stroke-width="1.1" stroke-linecap="round"/></svg>
<div class="t" style="left:342px;top:343px;font-size:16px;color:#333;letter-spacing:0.15px">ЦБ-00000079</div>
<div class="t" style="left:521px;top:343px;font-size:16px;color:#333;">27.05.2022</div>
<div class="t" style="left:600px;width:96px;text-align:right;top:343px;font-size:16px;color:#333">1</div>
<div class="t" style="left:717px;top:343px;font-size:15.6px;color:#333;">Действует</div>
<div class="t" style="left:1259px;top:343px;font-size:15.6px;color:#333;letter-spacing:0px">klopatin@rdv-it.ru</div>
<div style="position:absolute;left:302px;top:369px;width:1592px;height:32px;background:#fff"></div>
<div style="position:absolute;left:302px;top:401px;width:1592px;height:1px;background:#e3e3e3"></div>
<svg style="position:absolute;left:313px;top:379px;" width="20" height="16" viewBox="0 0 20 16"><rect x="0.5" y="0.5" width="15" height="12" fill="#f4f6f8" stroke="#8a9aac"/><path d="M3 3.5H12M3 6.5H12M3 9.5H9" stroke="#9aa5b1" stroke-width="1"/><path d="M10 10.4 L13 13.8 L18 7.2" fill="none" stroke="#17a02a" stroke-width="2.8" stroke-linecap="round" stroke-linejoin="round"/><path d="M10.3 10.6 L13 13.5 L17.6 7.4" fill="none" stroke="#3fd447" stroke-width="1.1" stroke-linecap="round"/></svg>
<div class="t" style="left:342px;top:376px;font-size:16px;color:#333;letter-spacing:0.15px">ЦБ-00000080</div>
<div class="t" style="left:521px;top:376px;font-size:16px;color:#333;">07.06.2022</div>
<div class="t" style="left:600px;width:96px;text-align:right;top:376px;font-size:16px;color:#333">33 …</div>
<div class="t" style="left:717px;top:376px;font-size:15.6px;color:#333;">Действует</div>
<div class="t" style="left:1259px;top:376px;font-size:15.6px;color:#333;letter-spacing:0px">rdvsupport</div>
<div class="t" style="left:1617px;top:376px;font-size:15.45px;color:#333;">Загрузка цен из внешнего источни…</div>
<div style="position:absolute;left:302px;top:402px;width:1592px;height:32px;background:#f9f9f9"></div>
<div style="position:absolute;left:302px;top:434px;width:1592px;height:1px;background:#e3e3e3"></div>
<svg style="position:absolute;left:313px;top:412px;" width="20" height="16" viewBox="0 0 20 16"><rect x="0.5" y="0.5" width="15" height="12" fill="#f4f6f8" stroke="#8a9aac"/><path d="M3 3.5H12M3 6.5H12M3 9.5H9" stroke="#9aa5b1" stroke-width="1"/><path d="M10 10.4 L13 13.8 L18 7.2" fill="none" stroke="#17a02a" stroke-width="2.8" stroke-linecap="round" stroke-linejoin="round"/><path d="M10.3 10.6 L13 13.5 L17.6 7.4" fill="none" stroke="#3fd447" stroke-width="1.1" stroke-linecap="round"/></svg>
<div class="t" style="left:342px;top:409px;font-size:16px;color:#333;letter-spacing:0.15px">ЦБ-00000081</div>
<div class="t" style="left:521px;top:409px;font-size:16px;color:#333;">27.06.2022</div>
<div class="t" style="left:600px;width:96px;text-align:right;top:409px;font-size:16px;color:#333">1</div>
<div class="t" style="left:717px;top:409px;font-size:15.6px;color:#333;">Действует</div>
<div class="t" style="left:1259px;top:409px;font-size:15.6px;color:#333;letter-spacing:0px">akolbatskov@rdv-it.ru</div>
<div style="position:absolute;left:302px;top:435px;width:1592px;height:32px;background:#fff"></div>
<div style="position:absolute;left:302px;top:467px;width:1592px;height:1px;background:#e3e3e3"></div>
<svg style="position:absolute;left:313px;top:445px;" width="20" height="16" viewBox="0 0 20 16"><rect x="0.5" y="0.5" width="15" height="12" fill="#f4f6f8" stroke="#8a9aac"/><path d="M3 3.5H12M3 6.5H12M3 9.5H9" stroke="#9aa5b1" stroke-width="1"/><path d="M10 10.4 L13 13.8 L18 7.2" fill="none" stroke="#17a02a" stroke-width="2.8" stroke-linecap="round" stroke-linejoin="round"/><path d="M10.3 10.6 L13 13.5 L17.6 7.4" fill="none" stroke="#3fd447" stroke-width="1.1" stroke-linecap="round"/></svg>
<div class="t" style="left:342px;top:442px;font-size:16px;color:#333;letter-spacing:0.15px">ЦБ-00000082</div>
<div class="t" style="left:521px;top:442px;font-size:16px;color:#333;">01.07.2022</div>
<div class="t" style="left:600px;width:96px;text-align:right;top:442px;font-size:16px;color:#333">1</div>
<div class="t" style="left:717px;top:442px;font-size:15.6px;color:#333;">Действует</div>
<div class="t" style="left:1259px;top:442px;font-size:15.6px;color:#333;letter-spacing:-0.1px">vkomratova@rdv-it.ru</div>
<div style="position:absolute;left:302px;top:468px;width:1592px;height:32px;background:#f9f9f9"></div>
<div style="position:absolute;left:302px;top:500px;width:1592px;height:1px;background:#e3e3e3"></div>
<svg style="position:absolute;left:313px;top:478px;" width="20" height="16" viewBox="0 0 20 16"><rect x="0.5" y="0.5" width="15" height="12" fill="#f4f6f8" stroke="#8a9aac"/><path d="M3 3.5H12M3 6.5H12M3 9.5H9" stroke="#9aa5b1" stroke-width="1"/><path d="M10 10.4 L13 13.8 L18 7.2" fill="none" stroke="#17a02a" stroke-width="2.8" stroke-linecap="round" stroke-linejoin="round"/><path d="M10.3 10.6 L13 13.5 L17.6 7.4" fill="none" stroke="#3fd447" stroke-width="1.1" stroke-linecap="round"/></svg>
<div class="t" style="left:342px;top:475px;font-size:16px;color:#333;letter-spacing:0.15px">ЦБ-00000083</div>
<div class="t" style="left:521px;top:475px;font-size:16px;color:#333;">01.07.2022</div>
<div class="t" style="left:600px;width:96px;text-align:right;top:475px;font-size:16px;color:#333">2</div>
<div class="t" style="left:717px;top:475px;font-size:15.6px;color:#333;">Действует</div>
<div class="t" style="left:1259px;top:475px;font-size:15.6px;color:#333;letter-spacing:-0.1px">vkomratova@rdv-it.ru</div>
<div style="position:absolute;left:302px;top:501px;width:1592px;height:32px;background:#fff"></div>
<div style="position:absolute;left:302px;top:533px;width:1592px;height:1px;background:#e3e3e3"></div>
<svg style="position:absolute;left:313px;top:511px;" width="20" height="16" viewBox="0 0 20 16"><rect x="0.5" y="0.5" width="15" height="12" fill="#f4f6f8" stroke="#8a9aac"/><path d="M3 3.5H12M3 6.5H12M3 9.5H9" stroke="#9aa5b1" stroke-width="1"/><path d="M10 10.4 L13 13.8 L18 7.2" fill="none" stroke="#17a02a" stroke-width="2.8" stroke-linecap="round" stroke-linejoin="round"/><path d="M10.3 10.6 L13 13.5 L17.6 7.4" fill="none" stroke="#3fd447" stroke-width="1.1" stroke-linecap="round"/></svg>
<div class="t" style="left:342px;top:508px;font-size:16px;color:#333;letter-spacing:0.15px">ЦБ-00000084</div>
<div class="t" style="left:521px;top:508px;font-size:16px;color:#333;">01.07.2022</div>
<div class="t" style="left:600px;width:96px;text-align:right;top:508px;font-size:16px;color:#333">3</div>
<div class="t" style="left:717px;top:508px;font-size:15.6px;color:#333;">Действует</div>
<div class="t" style="left:1259px;top:508px;font-size:15.6px;color:#333;letter-spacing:-0.1px">vkomratova@rdv-it.ru</div>
<div style="position:absolute;left:302px;top:534px;width:1592px;height:32px;background:#f9f9f9"></div>
<div style="position:absolute;left:302px;top:566px;width:1592px;height:1px;background:#e3e3e3"></div>
<svg style="position:absolute;left:313px;top:544px;" width="20" height="16" viewBox="0 0 20 16"><rect x="0.5" y="0.5" width="15" height="12" fill="#f4f6f8" stroke="#8a9aac"/><path d="M3 3.5H12M3 6.5H12M3 9.5H9" stroke="#9aa5b1" stroke-width="1"/><path d="M10 10.4 L13 13.8 L18 7.2" fill="none" stroke="#17a02a" stroke-width="2.8" stroke-linecap="round" stroke-linejoin="round"/><path d="M10.3 10.6 L13 13.5 L17.6 7.4" fill="none" stroke="#3fd447" stroke-width="1.1" stroke-linecap="round"/></svg>
<div class="t" style="left:342px;top:541px;font-size:16px;color:#333;letter-spacing:0.15px">ЦБ-00000085</div>
<div class="t" style="left:521px;top:541px;font-size:16px;color:#333;">05.07.2022</div>
<div class="t" style="left:600px;width:96px;text-align:right;top:541px;font-size:16px;color:#333">1</div>
<div class="t" style="left:717px;top:541px;font-size:15.6px;color:#333;">Действует</div>
<div class="t" style="left:1259px;top:541px;font-size:15.6px;color:#333;letter-spacing:-0.1px">vkomratova@rdv-it.ru</div>
<div style="position:absolute;left:302px;top:567px;width:1592px;height:32px;background:#fff"></div>
<div style="position:absolute;left:302px;top:599px;width:1592px;height:1px;background:#e3e3e3"></div>
<svg style="position:absolute;left:313px;top:577px;" width="20" height="16" viewBox="0 0 20 16"><rect x="0.5" y="0.5" width="15" height="12" fill="#f4f6f8" stroke="#8a9aac"/><path d="M3 3.5H12M3 6.5H12M3 9.5H9" stroke="#9aa5b1" stroke-width="1"/><path d="M10 10.4 L13 13.8 L18 7.2" fill="none" stroke="#17a02a" stroke-width="2.8" stroke-linecap="round" stroke-linejoin="round"/><path d="M10.3 10.6 L13 13.5 L17.6 7.4" fill="none" stroke="#3fd447" stroke-width="1.1" stroke-linecap="round"/></svg>
<div class="t" style="left:342px;top:574px;font-size:16px;color:#333;letter-spacing:0.15px">ЦБ-00000086</div>
<div class="t" style="left:521px;top:574px;font-size:16px;color:#333;">05.07.2022</div>
<div class="t" style="left:600px;width:96px;text-align:right;top:574px;font-size:16px;color:#333">2</div>
<div class="t" style="left:717px;top:574px;font-size:15.6px;color:#333;">Действует</div>
<div class="t" style="left:1259px;top:574px;font-size:15.6px;color:#333;letter-spacing:-0.1px">vkomratova@rdv-it.ru</div>
<div style="position:absolute;left:302px;top:600px;width:1592px;height:32px;background:#f9f9f9"></div>
<div style="position:absolute;left:302px;top:632px;width:1592px;height:1px;background:#e3e3e3"></div>
<svg style="position:absolute;left:313px;top:610px;" width="20" height="16" viewBox="0 0 20 16"><rect x="0.5" y="0.5" width="15" height="12" fill="#f4f6f8" stroke="#8a9aac"/><path d="M3 3.5H12M3 6.5H12M3 9.5H9" stroke="#9aa5b1" stroke-width="1"/><path d="M10 10.4 L13 13.8 L18 7.2" fill="none" stroke="#17a02a" stroke-width="2.8" stroke-linecap="round" stroke-linejoin="round"/><path d="M10.3 10.6 L13 13.5 L17.6 7.4" fill="none" stroke="#3fd447" stroke-width="1.1" stroke-linecap="round"/></svg>
<div class="t" style="left:342px;top:607px;font-size:16px;color:#333;letter-spacing:0.15px">ЦБ-00000087</div>
<div class="t" style="left:521px;top:607px;font-size:16px;color:#333;">05.07.2022</div>
<div class="t" style="left:600px;width:96px;text-align:right;top:607px;font-size:16px;color:#333">75 …</div>
<div class="t" style="left:717px;top:607px;font-size:15.6px;color:#333;">Действует</div>
<div class="t" style="left:1259px;top:607px;font-size:15.6px;color:#333;letter-spacing:0px">rdvsupport</div>
<div class="t" style="left:1617px;top:607px;font-size:15.45px;color:#333;">Загрузка цен из внешнего источни…</div>
<div style="position:absolute;left:302px;top:633px;width:1592px;height:32px;background:#fff"></div>
<div style="position:absolute;left:302px;top:665px;width:1592px;height:1px;background:#e3e3e3"></div>
<svg style="position:absolute;left:313px;top:643px;" width="20" height="16" viewBox="0 0 20 16"><rect x="0.5" y="0.5" width="15" height="12" fill="#f4f6f8" stroke="#8a9aac"/><path d="M3 3.5H12M3 6.5H12M3 9.5H9" stroke="#9aa5b1" stroke-width="1"/><path d="M10 10.4 L13 13.8 L18 7.2" fill="none" stroke="#17a02a" stroke-width="2.8" stroke-linecap="round" stroke-linejoin="round"/><path d="M10.3 10.6 L13 13.5 L17.6 7.4" fill="none" stroke="#3fd447" stroke-width="1.1" stroke-linecap="round"/></svg>
<div class="t" style="left:342px;top:640px;font-size:16px;color:#333;letter-spacing:0.15px">ЦБ-00000088</div>
<div class="t" style="left:521px;top:640px;font-size:16px;color:#333;">07.07.2022</div>
<div class="t" style="left:600px;width:96px;text-align:right;top:640px;font-size:16px;color:#333">68 …</div>
<div class="t" style="left:717px;top:640px;font-size:15.6px;color:#333;">Действует</div>
<div class="t" style="left:1259px;top:640px;font-size:15.6px;color:#333;letter-spacing:0px">rdvsupport</div>
<div class="t" style="left:1617px;top:640px;font-size:15.45px;color:#333;">Загрузка цен из внешнего источни…</div>
<div style="position:absolute;left:302px;top:666px;width:1592px;height:32px;background:#f9f9f9"></div>
<div style="position:absolute;left:302px;top:698px;width:1592px;height:1px;background:#e3e3e3"></div>
<svg style="position:absolute;left:313px;top:676px;" width="20" height="16" viewBox="0 0 20 16"><rect x="0.5" y="0.5" width="15" height="12" fill="#f4f6f8" stroke="#8a9aac"/><path d="M3 3.5H12M3 6.5H12M3 9.5H9" stroke="#9aa5b1" stroke-width="1"/><path d="M10 10.4 L13 13.8 L18 7.2" fill="none" stroke="#17a02a" stroke-width="2.8" stroke-linecap="round" stroke-linejoin="round"/><path d="M10.3 10.6 L13 13.5 L17.6 7.4" fill="none" stroke="#3fd447" stroke-width="1.1" stroke-linecap="round"/></svg>
<div class="t" style="left:342px;top:673px;font-size:16px;color:#333;letter-spacing:0.15px">ЦБ-00000089</div>
<div class="t" style="left:521px;top:673px;font-size:16px;color:#333;">07.07.2022</div>
<div class="t" style="left:600px;width:96px;text-align:right;top:673px;font-size:16px;color:#333">68 …</div>
<div class="t" style="left:717px;top:673px;font-size:15.6px;color:#333;">Действует</div>
<div class="t" style="left:1259px;top:673px;font-size:15.6px;color:#333;letter-spacing:-0.1px">vkomratova@rdv-it.ru</div>
<div style="position:absolute;left:302px;top:699px;width:1592px;height:32px;background:#fff"></div>
<div style="position:absolute;left:302px;top:731px;width:1592px;height:1px;background:#e3e3e3"></div>
<svg style="position:absolute;left:313px;top:709px;" width="20" height="16" viewBox="0 0 20 16"><rect x="0.5" y="0.5" width="15" height="12" fill="#f4f6f8" stroke="#8a9aac"/><path d="M3 3.5H12M3 6.5H12M3 9.5H9" stroke="#9aa5b1" stroke-width="1"/><path d="M10 10.4 L13 13.8 L18 7.2" fill="none" stroke="#17a02a" stroke-width="2.8" stroke-linecap="round" stroke-linejoin="round"/><path d="M10.3 10.6 L13 13.5 L17.6 7.4" fill="none" stroke="#3fd447" stroke-width="1.1" stroke-linecap="round"/></svg>
<div class="t" style="left:342px;top:706px;font-size:16px;color:#333;letter-spacing:0.15px">ЦБ-00000090</div>
<div class="t" style="left:521px;top:706px;font-size:16px;color:#333;">07.07.2022</div>
<div class="t" style="left:600px;width:96px;text-align:right;top:706px;font-size:16px;color:#333">68 …</div>
<div class="t" style="left:717px;top:706px;font-size:15.6px;color:#333;">Действует</div>
<div class="t" style="left:1259px;top:706px;font-size:15.6px;color:#333;letter-spacing:-0.1px">vkomratova@rdv-it.ru</div>
<div style="position:absolute;left:302px;top:732px;width:1592px;height:32px;background:#f9f9f9"></div>
<div style="position:absolute;left:302px;top:764px;width:1592px;height:1px;background:#e3e3e3"></div>
<svg style="position:absolute;left:313px;top:742px;" width="20" height="16" viewBox="0 0 20 16"><rect x="0.5" y="0.5" width="15" height="12" fill="#f4f6f8" stroke="#8a9aac"/><path d="M3 3.5H12M3 6.5H12M3 9.5H9" stroke="#9aa5b1" stroke-width="1"/><path d="M10 10.4 L13 13.8 L18 7.2" fill="none" stroke="#17a02a" stroke-width="2.8" stroke-linecap="round" stroke-linejoin="round"/><path d="M10.3 10.6 L13 13.5 L17.6 7.4" fill="none" stroke="#3fd447" stroke-width="1.1" stroke-linecap="round"/></svg>
<div class="t" style="left:342px;top:739px;font-size:16px;color:#333;letter-spacing:0.15px">ЦБ-00000091</div>
<div class="t" style="left:521px;top:739px;font-size:16px;color:#333;">11.07.2022</div>
<div class="t" style="left:600px;width:96px;text-align:right;top:739px;font-size:16px;color:#333">43 …</div>
<div class="t" style="left:717px;top:739px;font-size:15.6px;color:#333;">Действует</div>
<div class="t" style="left:1259px;top:739px;font-size:15.6px;color:#333;letter-spacing:0px">rdvsupport</div>
<div class="t" style="left:1617px;top:739px;font-size:15.45px;color:#333;">Загрузка цен из внешнего источни…</div>
<div style="position:absolute;left:302px;top:765px;width:1592px;height:32px;background:#fff"></div>
<div style="position:absolute;left:302px;top:797px;width:1592px;height:1px;background:#e3e3e3"></div>
<svg style="position:absolute;left:313px;top:775px;" width="20" height="16" viewBox="0 0 20 16"><rect x="0.5" y="0.5" width="15" height="12" fill="#f4f6f8" stroke="#8a9aac"/><path d="M3 3.5H12M3 6.5H12M3 9.5H9" stroke="#9aa5b1" stroke-width="1"/><path d="M10 10.4 L13 13.8 L18 7.2" fill="none" stroke="#17a02a" stroke-width="2.8" stroke-linecap="round" stroke-linejoin="round"/><path d="M10.3 10.6 L13 13.5 L17.6 7.4" fill="none" stroke="#3fd447" stroke-width="1.1" stroke-linecap="round"/></svg>
<div class="t" style="left:342px;top:772px;font-size:16px;color:#333;letter-spacing:0.15px">ЦБ-00000092</div>
<div class="t" style="left:521px;top:772px;font-size:16px;color:#333;">11.07.2022</div>
<div class="t" style="left:600px;width:96px;text-align:right;top:772px;font-size:16px;color:#333">46 …</div>
<div class="t" style="left:717px;top:772px;font-size:15.6px;color:#333;">Действует</div>
<div class="t" style="left:1259px;top:772px;font-size:15.6px;color:#333;letter-spacing:0px">rdvsupport</div>
<div class="t" style="left:1617px;top:772px;font-size:15.45px;color:#333;">Загрузка цен из внешнего источни…</div>
<div style="position:absolute;left:302px;top:798px;width:1592px;height:32px;background:#f9f9f9"></div>
<div style="position:absolute;left:302px;top:830px;width:1592px;height:1px;background:#e3e3e3"></div>
<svg style="position:absolute;left:313px;top:808px;" width="20" height="16" viewBox="0 0 20 16"><rect x="0.5" y="0.5" width="15" height="12" fill="#f4f6f8" stroke="#8a9aac"/><path d="M3 3.5H12M3 6.5H12M3 9.5H9" stroke="#9aa5b1" stroke-width="1"/><path d="M10 10.4 L13 13.8 L18 7.2" fill="none" stroke="#17a02a" stroke-width="2.8" stroke-linecap="round" stroke-linejoin="round"/><path d="M10.3 10.6 L13 13.5 L17.6 7.4" fill="none" stroke="#3fd447" stroke-width="1.1" stroke-linecap="round"/></svg>
<div class="t" style="left:342px;top:805px;font-size:16px;color:#333;letter-spacing:0.15px">ЦБ-00000093</div>
<div class="t" style="left:521px;top:805px;font-size:16px;color:#333;">11.07.2022</div>
<div class="t" style="left:600px;width:96px;text-align:right;top:805px;font-size:16px;color:#333">47 …</div>
<div class="t" style="left:717px;top:805px;font-size:15.6px;color:#333;">Действует</div>
<div class="t" style="left:1259px;top:805px;font-size:15.6px;color:#333;letter-spacing:0px">rdvsupport</div>
<div class="t" style="left:1617px;top:805px;font-size:15.45px;color:#333;">Загрузка цен из внешнего источни…</div>
<div style="position:absolute;left:302px;top:831px;width:1592px;height:32px;background:#fff"></div>
<div style="position:absolute;left:302px;top:863px;width:1592px;height:1px;background:#e3e3e3"></div>
<svg style="position:absolute;left:313px;top:841px;" width="20" height="16" viewBox="0 0 20 16"><rect x="0.5" y="0.5" width="15" height="12" fill="#f4f6f8" stroke="#8a9aac"/><path d="M3 3.5H12M3 6.5H12M3 9.5H9" stroke="#9aa5b1" stroke-width="1"/><path d="M10 10.4 L13 13.8 L18 7.2" fill="none" stroke="#17a02a" stroke-width="2.8" stroke-linecap="round" stroke-linejoin="round"/><path d="M10.3 10.6 L13 13.5 L17.6 7.4" fill="none" stroke="#3fd447" stroke-width="1.1" stroke-linecap="round"/></svg>
<div class="t" style="left:342px;top:838px;font-size:16px;color:#333;letter-spacing:0.15px">ЦБ-00000094</div>
<div class="t" style="left:521px;top:838px;font-size:16px;color:#333;">11.07.2022</div>
<div class="t" style="left:600px;width:96px;text-align:right;top:838px;font-size:16px;color:#333">52 …</div>
<div class="t" style="left:717px;top:838px;font-size:15.6px;color:#333;">Действует</div>
<div class="t" style="left:1259px;top:838px;font-size:15.6px;color:#333;letter-spacing:0px">rdvsupport</div>
<div class="t" style="left:1617px;top:838px;font-size:15.45px;color:#333;">Загрузка цен из внешнего источни…</div>
<div style="position:absolute;left:302px;top:864px;width:1592px;height:32px;background:#f9f9f9"></div>
<div style="position:absolute;left:302px;top:896px;width:1592px;height:1px;background:#e3e3e3"></div>
<svg style="position:absolute;left:313px;top:874px;" width="20" height="16" viewBox="0 0 20 16"><rect x="0.5" y="0.5" width="15" height="12" fill="#f4f6f8" stroke="#8a9aac"/><path d="M3 3.5H12M3 6.5H12M3 9.5H9" stroke="#9aa5b1" stroke-width="1"/><path d="M10 10.4 L13 13.8 L18 7.2" fill="none" stroke="#17a02a" stroke-width="2.8" stroke-linecap="round" stroke-linejoin="round"/><path d="M10.3 10.6 L13 13.5 L17.6 7.4" fill="none" stroke="#3fd447" stroke-width="1.1" stroke-linecap="round"/></svg>
<div class="t" style="left:342px;top:871px;font-size:16px;color:#333;letter-spacing:0.15px">ЦБ-00000095</div>
<div class="t" style="left:521px;top:871px;font-size:16px;color:#333;">14.07.2022</div>
<div class="t" style="left:600px;width:96px;text-align:right;top:871px;font-size:16px;color:#333">1</div>
<div class="t" style="left:717px;top:871px;font-size:15.6px;color:#333;">Действует</div>
<div class="t" style="left:1259px;top:871px;font-size:15.6px;color:#333;letter-spacing:-0.1px">vkomratova@rdv-it.ru</div>
<div style="position:absolute;left:302px;top:897px;width:1592px;height:32px;background:#fff"></div>
<div style="position:absolute;left:302px;top:929px;width:1592px;height:1px;background:#e3e3e3"></div>
<svg style="position:absolute;left:313px;top:907px;" width="20" height="16" viewBox="0 0 20 16"><rect x="0.5" y="0.5" width="15" height="12" fill="#f4f6f8" stroke="#8a9aac"/><path d="M3 3.5H12M3 6.5H12M3 9.5H9" stroke="#9aa5b1" stroke-width="1"/><path d="M10 10.4 L13 13.8 L18 7.2" fill="none" stroke="#17a02a" stroke-width="2.8" stroke-linecap="round" stroke-linejoin="round"/><path d="M10.3 10.6 L13 13.5 L17.6 7.4" fill="none" stroke="#3fd447" stroke-width="1.1" stroke-linecap="round"/></svg>
<div class="t" style="left:342px;top:904px;font-size:16px;color:#333;letter-spacing:0.15px">ЦБ-00000096</div>
<div class="t" style="left:521px;top:904px;font-size:16px;color:#333;">14.07.2022</div>
<div class="t" style="left:600px;width:96px;text-align:right;top:904px;font-size:16px;color:#333">2</div>
<div class="t" style="left:717px;top:904px;font-size:15.6px;color:#333;">Действует</div>
<div class="t" style="left:1259px;top:904px;font-size:15.6px;color:#333;letter-spacing:-0.1px">vkomratova@rdv-it.ru</div>
<div style="position:absolute;left:302px;top:930px;width:1592px;height:32px;background:#f9f9f9"></div>
<div style="position:absolute;left:302px;top:962px;width:1592px;height:1px;background:#e3e3e3"></div>
<svg style="position:absolute;left:313px;top:940px;" width="20" height="16" viewBox="0 0 20 16"><rect x="0.5" y="0.5" width="15" height="12" fill="#f4f6f8" stroke="#8a9aac"/><path d="M3 3.5H12M3 6.5H12M3 9.5H9" stroke="#9aa5b1" stroke-width="1"/><path d="M10 10.4 L13 13.8 L18 7.2" fill="none" stroke="#17a02a" stroke-width="2.8" stroke-linecap="round" stroke-linejoin="round"/><path d="M10.3 10.6 L13 13.5 L17.6 7.4" fill="none" stroke="#3fd447" stroke-width="1.1" stroke-linecap="round"/></svg>
<div class="t" style="left:342px;top:937px;font-size:16px;color:#333;letter-spacing:0.15px">ЦБ-00000098</div>
<div class="t" style="left:521px;top:937px;font-size:16px;color:#333;">20.07.2022</div>
<div class="t" style="left:600px;width:96px;text-align:right;top:937px;font-size:16px;color:#333">1</div>
<div class="t" style="left:717px;top:937px;font-size:15.6px;color:#333;">Действует</div>
<div class="t" style="left:1259px;top:937px;font-size:15.6px;color:#333;letter-spacing:-0.07px">aborovtsova@rdv-it.ru</div>
<div style="position:absolute;left:302px;top:963px;width:1592px;height:32px;background:#fff"></div>
<div style="position:absolute;left:302px;top:995px;width:1592px;height:1px;background:#e3e3e3"></div>
<svg style="position:absolute;left:313px;top:973px;" width="20" height="16" viewBox="0 0 20 16"><rect x="0.5" y="0.5" width="15" height="12" fill="#f4f6f8" stroke="#8a9aac"/><path d="M3 3.5H12M3 6.5H12M3 9.5H9" stroke="#9aa5b1" stroke-width="1"/></svg>
<div class="t" style="left:342px;top:970px;font-size:16px;color:#333;letter-spacing:0.15px">ЦБ-00000097</div>
<div class="t" style="left:521px;top:970px;font-size:16px;color:#333;">20.07.2022</div>
<div class="t" style="left:600px;width:96px;text-align:right;top:970px;font-size:16px;color:#333">1</div>
<div class="t" style="left:1259px;top:970px;font-size:15.6px;color:#333;letter-spacing:-0.07px">aborovtsova@rdv-it.ru</div>
<div style="position:absolute;left:302px;top:996px;width:1592px;height:32px;background:#fff"></div>
<div style="position:absolute;left:302px;top:997px;width:1592px;height:30px;background:#fef1c4"></div>
<div style="position:absolute;left:302px;top:1028px;width:1592px;height:1px;background:#e3e3e3"></div>
<div style="position:absolute;left:510px;top:996px;width:1px;height:32px;background:#fff"></div>
<div style="position:absolute;left:644px;top:996px;width:1px;height:32px;background:#fff"></div>
<div style="position:absolute;left:706px;top:996px;width:1px;height:32px;background:#fff"></div>
<div style="position:absolute;left:1248px;top:996px;width:1px;height:32px;background:#fff"></div>
<div style="position:absolute;left:1606px;top:996px;width:1px;height:32px;background:#fff"></div>
<div style="position:absolute;left:511px;top:997px;width:133px;height:30px;background:#fde28d;border:3px solid #f7c517;box-sizing:border-box"></div>
<svg style="position:absolute;left:313px;top:1006px;" width="20" height="16" viewBox="0 0 20 16"><rect x="0.5" y="0.5" width="15" height="12" fill="#f4f6f8" stroke="#8a9aac"/><path d="M3 3.5H12M3 6.5H12M3 9.5H9" stroke="#9aa5b1" stroke-width="1"/><path d="M10 10.4 L13 13.8 L18 7.2" fill="none" stroke="#17a02a" stroke-width="2.8" stroke-linecap="round" stroke-linejoin="round"/><path d="M10.3 10.6 L13 13.5 L17.6 7.4" fill="none" stroke="#3fd447" stroke-width="1.1" stroke-linecap="round"/></svg>
<div class="t" style="left:342px;top:1003px;font-size:16px;color:#333;letter-spacing:0.15px">ЦБ-00000099</div>
<div class="t" style="left:521px;top:1003px;font-size:16px;color:#333;">21.07.2022</div>
<div class="t" style="left:600px;width:96px;text-align:right;top:1003px;font-size:16px;color:#333">51 …</div>
<div class="t" style="left:717px;top:1003px;font-size:15.6px;color:#333;">Действует</div>
<div class="t" style="left:1259px;top:1003px;font-size:15.6px;color:#333;letter-spacing:0px">rdvsupport</div>
<div class="t" style="left:1617px;top:1003px;font-size:15.45px;color:#333;">Загрузка цен из внешнего источни…</div>
<div style="position:absolute;left:1774px;top:1036px;width:121px;height:27px;border:1px solid #a3a3a3;box-sizing:border-box;background:#fff"></div>
<div style="position:absolute;left:1775px;top:1037px;width:59px;height:25px;background:linear-gradient(#fff,#f0f0f0)"></div>
<div style="position:absolute;left:1804px;top:1036px;width:1px;height:27px;background:#a3a3a3"></div>
<div style="position:absolute;left:1834px;top:1036px;width:1px;height:27px;background:#a3a3a3"></div>
<div style="position:absolute;left:1864px;top:1036px;width:1px;height:27px;background:#a3a3a3"></div>
<svg style="position:absolute;left:1782px;top:1044px;" width="16" height="12" viewBox="0 0 16 12"><path d="M2 2.5H13" stroke="#333" stroke-width="1"/><path d="M1.2 9.2 L7.5 2.8 L13.8 9.2 Z" fill="#333"/></svg>
<svg style="position:absolute;left:1812px;top:1044px;" width="16" height="12" viewBox="0 0 16 12"><path d="M1.2 9.2 L7.5 2.8 L13.8 9.2 Z" fill="#333"/></svg>
<svg style="position:absolute;left:1842px;top:1044px;" width="16" height="12" viewBox="0 0 16 12"><path d="M1 3.2 L14 3.2 L7.5 10 Z" fill="#aaa"/></svg>
<svg style="position:absolute;left:1872px;top:1044px;" width="16" height="12" viewBox="0 0 16 12"><path d="M1 3.2 L14 3.2 L7.5 9.5 Z" fill="#aaa"/><path d="M2 10.2H13" stroke="#bbb" stroke-width="1"/></svg>
</body></html>
